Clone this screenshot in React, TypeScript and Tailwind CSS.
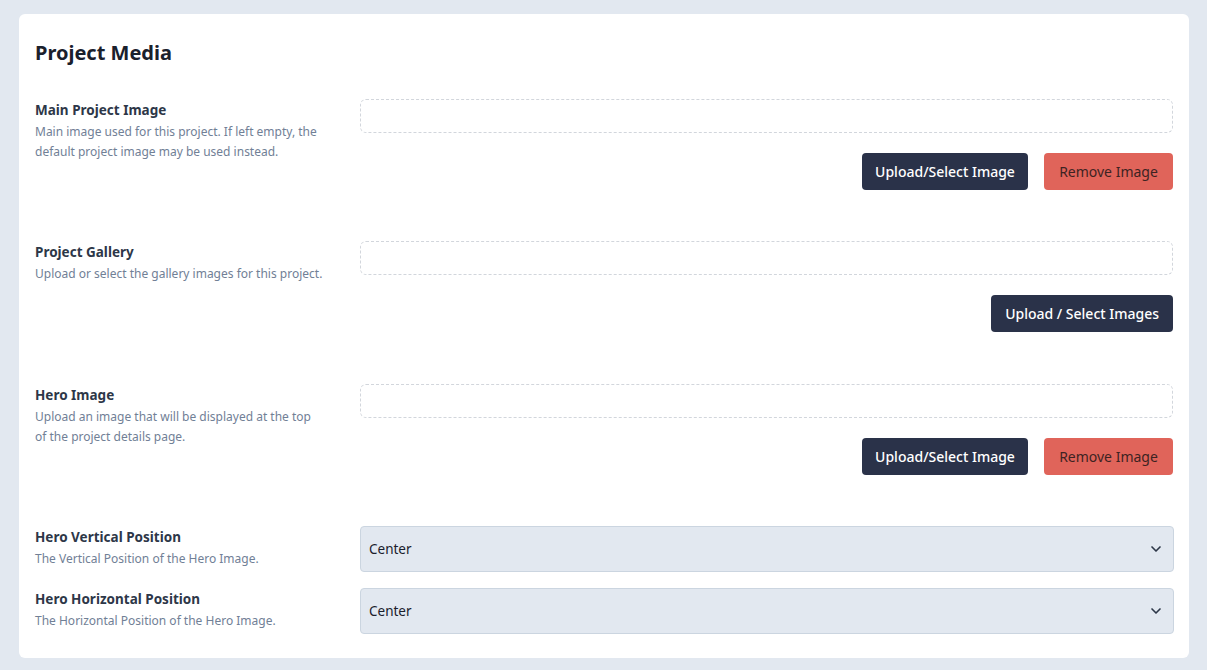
import React from 'react';
import { ChevronDown } from 'lucide-react';

const font = { fontFamily: '"Noto Sans", "Open Sans", sans-serif' };

interface FieldProps {
  label: string;
  description: string;
  children: React.ReactNode;
}

function Field({ label, description, children }: FieldProps) {
  return (
    <div className="flex gap-5">
      <div className="w-[305px] shrink-0 pt-px">
        <div className="text-[13.5px] font-bold text-[#2d3748] leading-5">{label}</div>
        <p className="mt-0.5 max-w-[288px] text-[12px] leading-5 text-[#718096]">{description}</p>
      </div>
      <div className="flex-1 min-w-0">{children}</div>
    </div>
  );
}

function MediaPicker({ multiple }: { multiple?: boolean }) {
  return (
    <div>
      <div className="h-[34px] rounded-md border border-dashed border-[#d2d6dc]" />
      <div className="mt-5 flex justify-end gap-4">
        {multiple ? (
          <button className="h-[37px] px-[14px] rounded bg-[#2a3249] text-sm font-medium text-white">
            Upload / Select Images
          </button>
        ) : (
          <>
            <button className="h-[37px] w-[166px] rounded bg-[#2a3249] text-sm font-medium text-white">
              Upload/Select Image
            </button>
            <button className="h-[37px] w-[129px] rounded bg-[#e0645a] text-sm text-[#3d2322]">
              Remove Image
            </button>
          </>
        )}
      </div>
    </div>
  );
}

function SelectBox({ value }: { value: string }) {
  return (
    <div className="h-[46px] mr-[-1px] flex items-center justify-between rounded border border-[#cbd5e0] bg-[#e2e8f0] pl-2 pr-[9px] text-[13.5px] text-[#1a202c]">
      <span>{value}</span>
      <ChevronDown size={16} strokeWidth={2.5} className="text-[#2d3748]" />
    </div>
  );
}

export default function App() {
  return (
    <div className="min-h-[670px] bg-[#e2e8f0] pl-[19px] pr-[18px] pt-[14px] pb-3" style={font}>
      <div className="rounded-md bg-white px-4 pt-[25px] pb-6">
        <h2 className="text-xl font-bold leading-7 text-[#1a202c]">Project Media</h2>
        <div className="mt-8 flex flex-col">
          <Field
            label="Main Project Image"
            description="Main image used for this project. If left empty, the default project image may be used instead."
          >
            <MediaPicker />
          </Field>
          <div className="h-[51px]" />
          <Field label="Project Gallery" description="Upload or select the gallery images for this project.">
            <MediaPicker multiple />
          </Field>
          <div className="h-[52px]" />
          <Field
            label="Hero Image"
            description="Upload an image that will be displayed at the top of the project details page."
          >
            <MediaPicker />
          </Field>
          <div className="h-[51px]" />
          <div className="flex flex-col gap-4">
            <Field label="Hero Vertical Position" description="The Vertical Position of the Hero Image.">
              <SelectBox value="Center" />
            </Field>
            <Field label="Hero Horizontal Position" description="The Horizontal Position of the Hero Image.">
              <SelectBox value="Center" />
            </Field>
          </div>
        </div>
      </div>
    </div>
  );
}
